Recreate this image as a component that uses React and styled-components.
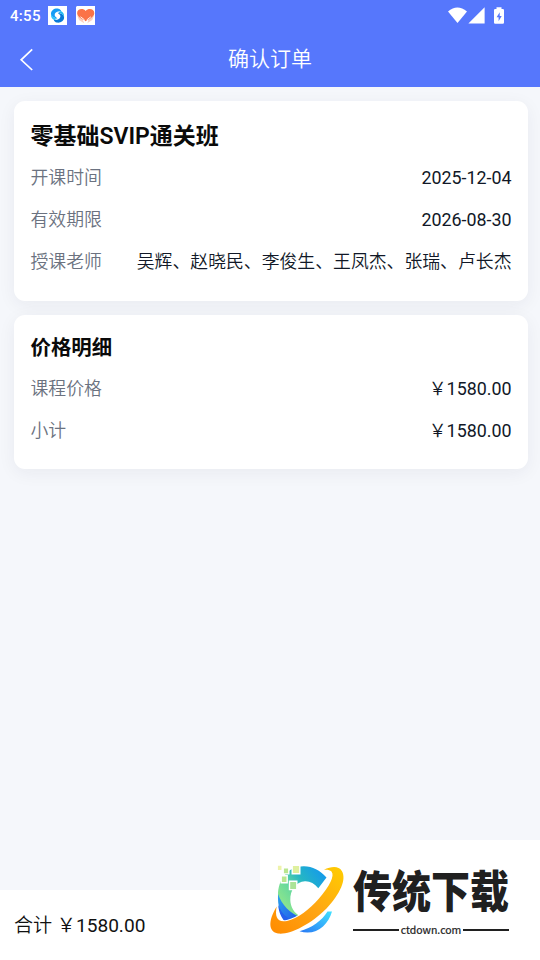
import React from 'react';
import styled, { createGlobalStyle } from 'styled-components';

const GlobalStyle = createGlobalStyle`
	* {
		box-sizing: border-box;
	}
	body {
		margin: 0;
		background: #f5f7fb;
		font-family: Roboto, "Noto Sans CJK SC", sans-serif;
	}
`;

const Page = styled.div`
	position: relative;
	display: flex;
	flex-direction: column;
	height: 960px;
	width: 540px;
	overflow: hidden;
	background: #f5f7fb;
`;

const TopArea = styled.div`
	height: 87px;
	flex: none;
	background: #5677fc;
	color: #fff;
`;

const StatusBar = styled.div`
	display: flex;
	align-items: center;
	justify-content: space-between;
	height: 31px;
	padding: 0 35px 0 10px;
`;

const StatusGroup = styled.div`
	display: flex;
	align-items: center;
`;

const Clock = styled.span`
	width: 38px;
	font-size: 15px;
	font-weight: 500;
	letter-spacing: 0.3px;
	line-height: 31px;
	padding-top: 1px;
	white-space: nowrap;
`;

const NavBar = styled.header`
	display: grid;
	grid-template-columns: 54px 1fr 54px;
	align-items: center;
	height: 56px;
`;

const BackButton = styled.button`
	display: flex;
	align-items: center;
	height: 56px;
	padding: 2px 0 0 18px;
	border: 0;
	background: none;
	color: inherit;
`;

const NavTitle = styled.h1`
	margin: 0;
	font-size: 21px;
	font-weight: 350;
	line-height: 56px;
	text-align: center;
`;

const Content = styled.main`
	display: flex;
	flex: 1;
	flex-direction: column;
	gap: 14px;
	padding: 14px 12px 0 14px;
`;

const Card = styled.section`
	height: ${props => props.height}px;
	padding: ${props => props.top}px 16.5px 0;
	border-radius: 11px;
	background: #fff;
	box-shadow: 0 4px 18px rgba(30, 35, 60, 0.06);
`;

const CardTitle = styled.h2`
	margin: 0;
	font-size: ${props => props.size}px;
	font-weight: 600;
	line-height: 34px;
	margin-bottom: 3px;
	color: #0a0a0a;
`;

const Row = styled.div`
	display: flex;
	align-items: baseline;
	justify-content: space-between;
	height: 42px;
	font-size: 17.85px;
	font-weight: 350;
	line-height: 42px;
	white-space: nowrap;
`;

const Label = styled.span`
	color: #6b7280;
`;

const Value = styled.span`
	color: #111827;
`;

const Digits = styled.span`
	font-weight: 400;
`;

const Footer = styled.footer`
	height: 70px;
	flex: none;
	padding: 1px 0 0 14px;
	background: #fff;
	color: #111;
	font-size: 19.1px;
	font-weight: 350;
	line-height: 70px;
`;

const Brand = styled.div`
	position: absolute;
	right: 0;
	bottom: 0;
	display: flex;
	width: 280px;
	height: 120px;
	background: #fff;
`;

const BrandText = styled.div`
	display: flex;
	flex-direction: column;
	width: 158px;
	padding-top: 25px;
	margin-left: -7px;
`;

const BrandName = styled.div`
	height: 49px;
	font-family: "Noto Sans CJK SC", sans-serif;
	font-size: 39px;
	font-weight: 900;
	line-height: 49px;
	white-space: nowrap;
	color: #202020;
	transform: scaleY(1.13);
`;

const BrandSite = styled.div`
	display: flex;
	align-items: center;
	gap: 2px;
	width: 156px;
	height: 14px;
	margin-top: 9px;
	font-family: "Noto Sans CJK SC", sans-serif;
	font-size: 10.5px;
	font-weight: 400;
	line-height: 14px;
	color: #202020;
	-webkit-text-stroke: 0.2px #202020;

	&::before,
	&::after {
		content: "";
		flex: 1;
		height: 2px;
		background: #202020;
	}
`;

const courseRows = [
    { label: '开课时间', digits: '2025-12-04' },
    { label: '有效期限', digits: '2026-08-30' },
    { label: '授课老师', value: '吴辉、赵晓民、李俊生、王凤杰、张瑞、卢长杰' },
];

const priceRows = [
    { label: '课程价格', value: '￥', digits: '1580.00' },
    { label: '小计', value: '￥', digits: '1580.00' },
];

function SyncAppIcon() {
    return (
        <svg width="19" height="19" viewBox="0 0 19 19">
            <path fill="#fff" d="M0 0h19v19H0z" />
            <path fill="#149cf5" d="M10.500 2.700C6.500 2 3.200 4.300 3 7.500c-.2 3 2.500 4.300 6.500 5-1-1.200-2.600-1.700-2.800-3.300C6.500 7.200 8.200 6 10 5.500l3.300-.3c-.5-1.300-1.500-2.200-2.800-2.500z" />
            <path fill="#2cc2fa" d="M3 8c-.3 3.200 1.200 5.200 3.400 6.200l2.600-1.800C6.200 12 4 10.800 3 8z" />
            <path fill="#0879d7" d="M8.600 16.500c4 .7 7.300-1.600 7.500-4.800.2-3-2.500-4.300-6.500-5 1 1.200 2.600 1.700 2.800 3.300.2 2-1.500 3.200-3.300 3.700l-3.300.3c.5 1.300 1.500 2.200 2.800 2.500z" />
            <path fill="#20b8f2" d="M16.100 11c.3-3.100-1.100-5-3.200-6.100l-2.600 1.900c2.800.4 4.700 1.600 5.800 4.200z" />
        </svg>
    );
}

const HeartIcon = styled.svg`
	margin-left: 9px;
`;

function HeartAppIcon() {
    return (
        <HeartIcon width="19" height="19" viewBox="0 0 19 19">
            <path fill="#fff" d="M1 0h18v19H0V1z" />
            <path fill="#fbd0c0" d="M1 9l5.500 4 2 4.500L3 14zM18.300 9l-5.500 4-2 4.500 5.500-3.500z" />
            <path fill="#fb7347" d="M9.700 15.300C8 13.500 1.200 11.500 1.100 7.200 1.100 2.800 7 1.800 9.700 5c2.700-3.200 8.600-2.200 8.600 2.200 0 4.300-6.900 6.300-8.600 8.100z" />
            <path fill="none" stroke="#fff" strokeWidth=".9" d="M4.500 10.800l3.600 2.700.4 4M14.900 10.800l-3.600 2.700-.4 4" />
        </HeartIcon>
    );
}

function SignalIcons() {
    return (
        <svg width="57" height="18" viewBox="448 6 57 18" fill="#fff">
            <path d="M448 10.400Q457.300 2.700 467 10.400L457.500 22z" />
            <path d="M484.600 6.200v16.300H468.400z" />
            <path d="M496.500 8V6.200h5V8h1.300q1.200 0 1.200 1.200v12.400q0 1.200-1.200 1.200h-7.600q-1.200 0-1.200-1.200V9.200Q494 8 495.200 8z" />
            <path fill="#5677fc" d="M499.700 11.200l-3.100 5h2v4l3.100-5.200h-2z" />
        </svg>
    );
}

function BrandLogo() {
    return (
        <svg width="100" height="120" viewBox="0 0 100 120">
            <defs>
                <linearGradient id="ring" x1="0" y1="1" x2="1" y2="0">
                    <stop offset="0" stopColor="#ff8b00" />
                    <stop offset=".5" stopColor="#ffa614" />
                    <stop offset="1" stopColor="#ffcd00" />
                </linearGradient>
                <linearGradient id="arc" gradientUnits="userSpaceOnUse" x1="22" y1="65" x2="64" y2="34">
                    <stop offset="0" stopColor="#8ee68c" />
                    <stop offset=".3" stopColor="#68d99c" />
                    <stop offset=".6" stopColor="#25b6c4" />
                    <stop offset="1" stopColor="#159bea" />
                </linearGradient>
                <linearGradient id="tail" x1="0" y1="1" x2="1" y2="0">
                    <stop offset="0" stopColor="#2877f5" />
                    <stop offset="1" stopColor="#42e1ff" />
                </linearGradient>
                <linearGradient id="shade" x1="0" y1="0" x2="1" y2="1">
                    <stop offset="0" stopColor="#2ba2ee" />
                    <stop offset="1" stopColor="#1f50e8" />
                </linearGradient>
            </defs>
            <path fill="url(#arc)" d="M66.500 37.500C60 30 52 26 43.500 26.200 28 26.500 18 39 18 55.500c0 11 5 21 13.500 26l10-4.500C34 73.500 30.500 67 30.300 60c-.3-10 5.700-18.500 14.700-18.800 5-.2 9.500 2.300 13.300 7z" />
            <path fill="url(#shade)" d="M18 54c4 11 11.500 19 23 23.500L27 83.500C20.500 77 17.500 66 18 54z" />
            <path fill="#2460ed" d="M18.200 65C21 72 25.500 77.500 32 80l-6 3C21.500 78 18.600 72 18.200 65z" />
            <path fill="url(#tail)" d="M39.500 91.300C52 88 62 80.500 67.500 71.500h4.500c-4 14-16.500 25-32.500 19.800z" />
            <path fill="url(#ring)" stroke="#fff" strokeWidth="2" paintOrder="stroke" d="M64 29.800C71 26.500 78.500 25.500 81.800 31c5 8-1.300 22.500-15.300 37.500C50 85 29.500 95 18 93.500 8.800 92 7.500 81.500 16.700 66.500 14.500 77 17.500 83 27 80.900 37.500 78.600 49.500 69.500 59 58.500 69.500 46.500 75 36 71.500 31.600c-1.700-1.700-3.900-2.100-7.500-1.800z" />
            <g stroke="#fff" strokeWidth="1.400">
                <path fill="#dff09e" d="M32.200 25.200h7.600v8.600h-7.600z" />
                <path fill="#b9e68f" d="M23.200 27.900h5.600v6h-5.600zM21.200 35.700h6v7h-6z" />
                <path fill="#ace397" d="M29.500 41.200h7.300v8.400h-7.300z" />
                <path fill="#eef3aa" d="M17.200 25h5v5.600h-5z" />
            </g>
        </svg>
    );
}

function InfoCard({ title, titleSize, rows, height, top }) {
    return (
        <Card height={height} top={top}>
            <CardTitle size={titleSize}>{title}</CardTitle>
            {rows.map(row => (
                <Row key={row.label}>
                    <Label>{row.label}</Label>
                    <Value>
                        {row.value}
                        {row.digits && <Digits>{row.digits}</Digits>}
                    </Value>
                </Row>
            ))}
        </Card>
    );
}

function App() {
    return (
        <Page>
            <GlobalStyle />
            <TopArea>
                <StatusBar>
                    <StatusGroup>
                        <Clock>4:55</Clock>
                        <SyncAppIcon />
                        <HeartAppIcon />
                    </StatusGroup>
                    <SignalIcons />
                </StatusBar>
                <NavBar>
                    <BackButton aria-label="返回">
                        <svg width="18" height="24" viewBox="0 0 18 24" fill="none" stroke="currentColor" strokeWidth="1.7">
                            <path d="M14.200 1.400L3.200 11.800l11 10.200" />
                        </svg>
                    </BackButton>
                    <NavTitle>确认订单</NavTitle>
                </NavBar>
            </TopArea>
            <Content>
                <InfoCard title="零基础SVIP通关班" titleSize={23} rows={courseRows} height={200} top={19} />
                <InfoCard title="价格明细" titleSize={20.4} rows={priceRows} height={154} top={16} />
            </Content>
            <Footer>合计 ￥<Digits>1580.00</Digits></Footer>
            <Brand>
                <BrandLogo />
                <BrandText>
                    <BrandName>传统下载</BrandName>
                    <BrandSite>ctdown.com</BrandSite>
                </BrandText>
            </Brand>
        </Page>
    );
}

export default App;
